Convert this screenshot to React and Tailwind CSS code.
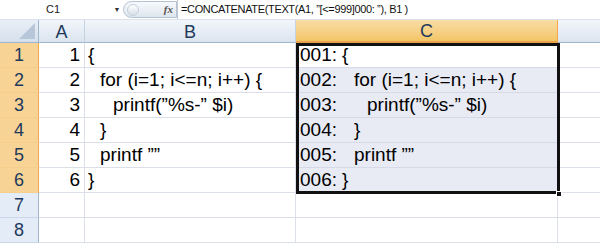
const lines = [
    { n: 1, indent: 0, text: '{' },
    { n: 2, indent: 1, text: 'for (i=1; i<=n; i++) {' },
    { n: 3, indent: 2, text: 'printf(”%s-” $i)' },
    { n: 4, indent: 1, text: '}' },
    { n: 5, indent: 1, text: 'printf ””' },
    { n: 6, indent: 0, text: '}' },
];

const font = { fontFamily: '"Liberation Sans", Arial, sans-serif' };
const indentClass = ['pl-0', 'pl-[12px]', 'pl-[25px]'];

function ColHeader({ label, width, active }) {
    return (
        <div
            className={`flex h-full shrink-0 items-center justify-center border-r pt-[2px] text-[18px] text-[#1e395b] ${width} ${
                active
                    ? 'border-r-[#f4a84a] border-b-2 border-b-[#e8a34b] bg-gradient-to-b from-[#f9dda5] to-[#f3c566]'
                    : 'border-r-[#c5d2e2] border-b border-b-[#9eb6ce] bg-gradient-to-b from-[#f2f6fb] to-[#dbe4ef]'
            }`}
        >
            {label}
        </div>
    );
}

function RowHeader({ n, active }) {
    return (
        <div
            className={`flex h-full w-[39px] shrink-0 items-center justify-center border-b border-r text-[18px] text-[#1e395b] ${
                active
                    ? 'border-b-[#f6cf8c] border-r-[#f0a94f] bg-[#f8d396]'
                    : 'border-b-[#c9d6e8] border-r-[#9eb6ce] bg-[#e4ecf7]'
            }`}
        >
            {n}
        </div>
    );
}

export default function App() {
    return (
        <div className="h-[250px] w-[600px] overflow-hidden bg-white text-black" style={font}>
            {/* formula bar */}
            <div className="flex h-[20px] items-center border-b border-[#dde3ec] bg-white">
                <div className="flex w-[112px] items-center justify-center pr-[6px] text-[11px] text-[#222]">C1</div>
                <div className="flex w-[10px] justify-center text-[7px] leading-none text-[#333]">▼</div>
                <div className="ml-[1px] flex h-[17px] w-[54px] items-center rounded-l-full border border-[#b4c2d4] bg-gradient-to-b from-[#f7f9fc] to-[#dfe6ef]">
                    <div className="ml-[3px] h-[12px] w-[12px] rounded-full border border-[#c4cfdc] bg-gradient-to-b from-white to-[#d7dfe9]" />
                    <div className="ml-auto mr-[3px] text-[11px] italic font-bold text-[#555]" style={{ fontFamily: '"Liberation Serif", serif' }}>
                        fx
                    </div>
                </div>
                <div className="flex h-[19px] flex-1 items-center border-l border-[#c0c8d4] pl-[3px] text-[11px] tracking-[-0.35px] text-[#111]">
                    =CONCATENATE(TEXT(A1, ”[&lt;=999]000: ”), B1 )
                </div>
            </div>

            {/* column headers */}
            <div className="flex h-[23px]">
                <div className="relative h-full w-[39px] shrink-0 border-b border-r border-[#9eb6ce] bg-gradient-to-b from-[#e9eff7] to-[#d6e0ec]">
                    <svg className="absolute bottom-[3px] right-[3px]" width="16" height="16" viewBox="0 0 16 16">
                        <polygon points="16,0 16,16 0,16" fill="#b7c6d8" />
                    </svg>
                </div>
                <ColHeader label="A" width="w-[46px]" />
                <ColHeader label="B" width="w-[211px]" />
                <ColHeader label="C" width="w-[262px]" active />
                <div className="h-full flex-1 border-b border-[#9eb6ce] bg-gradient-to-b from-[#f2f6fb] to-[#dbe4ef]" />
            </div>

            {/* grid body */}
            <div className="relative">
                {lines.map((l) => (
                    <div key={l.n} className="flex h-[25px]">
                        <RowHeader n={l.n} active />
                        <div className="flex h-full w-[46px] shrink-0 items-center justify-end border-b border-r border-[#dadfe8] pr-[4px] text-[19px]">
                            {l.n}
                        </div>
                        <div className="flex h-full w-[211px] shrink-0 items-center whitespace-pre border-b border-r border-[#dadfe8] pl-[3px] text-[19px]">
                            <span className={indentClass[l.indent]}>{l.text}</span>
                        </div>
                        <div
                            className={`flex h-full w-[262px] shrink-0 items-center whitespace-pre border-b border-r border-[#d6dae6] pl-[4px] text-[19px] ${
                                l.n === 1 ? 'bg-white' : 'bg-[#e8eaf4]'
                            }`}
                        >
                            <span className="inline-block w-[42px]">{`00${l.n}:`}</span>
                            <span className={indentClass[l.indent]}>{l.text}</span>
                        </div>
                        <div className="h-full flex-1 border-b border-[#dadfe8]" />
                    </div>
                ))}
                {[7, 8].map((n) => (
                    <div key={n} className="flex h-[25px]">
                        <RowHeader n={n} />
                        <div className="h-full w-[46px] shrink-0 border-b border-r border-[#dadfe8]" />
                        <div className="h-full w-[211px] shrink-0 border-b border-r border-[#dadfe8]" />
                        <div className="h-full w-[262px] shrink-0 border-b border-r border-[#dadfe8]" />
                        <div className="h-full flex-1 border-b border-[#dadfe8]" />
                    </div>
                ))}

                {/* selection outline C1:C6 */}
                <div className="pointer-events-none absolute left-[296px] top-0 h-[151px] w-[264px] border-[3px] border-[#111]" />
                <div className="absolute left-[556px] top-[148px] h-[6px] w-[6px] border border-white bg-[#111]" />
            </div>
        </div>
    );
}
